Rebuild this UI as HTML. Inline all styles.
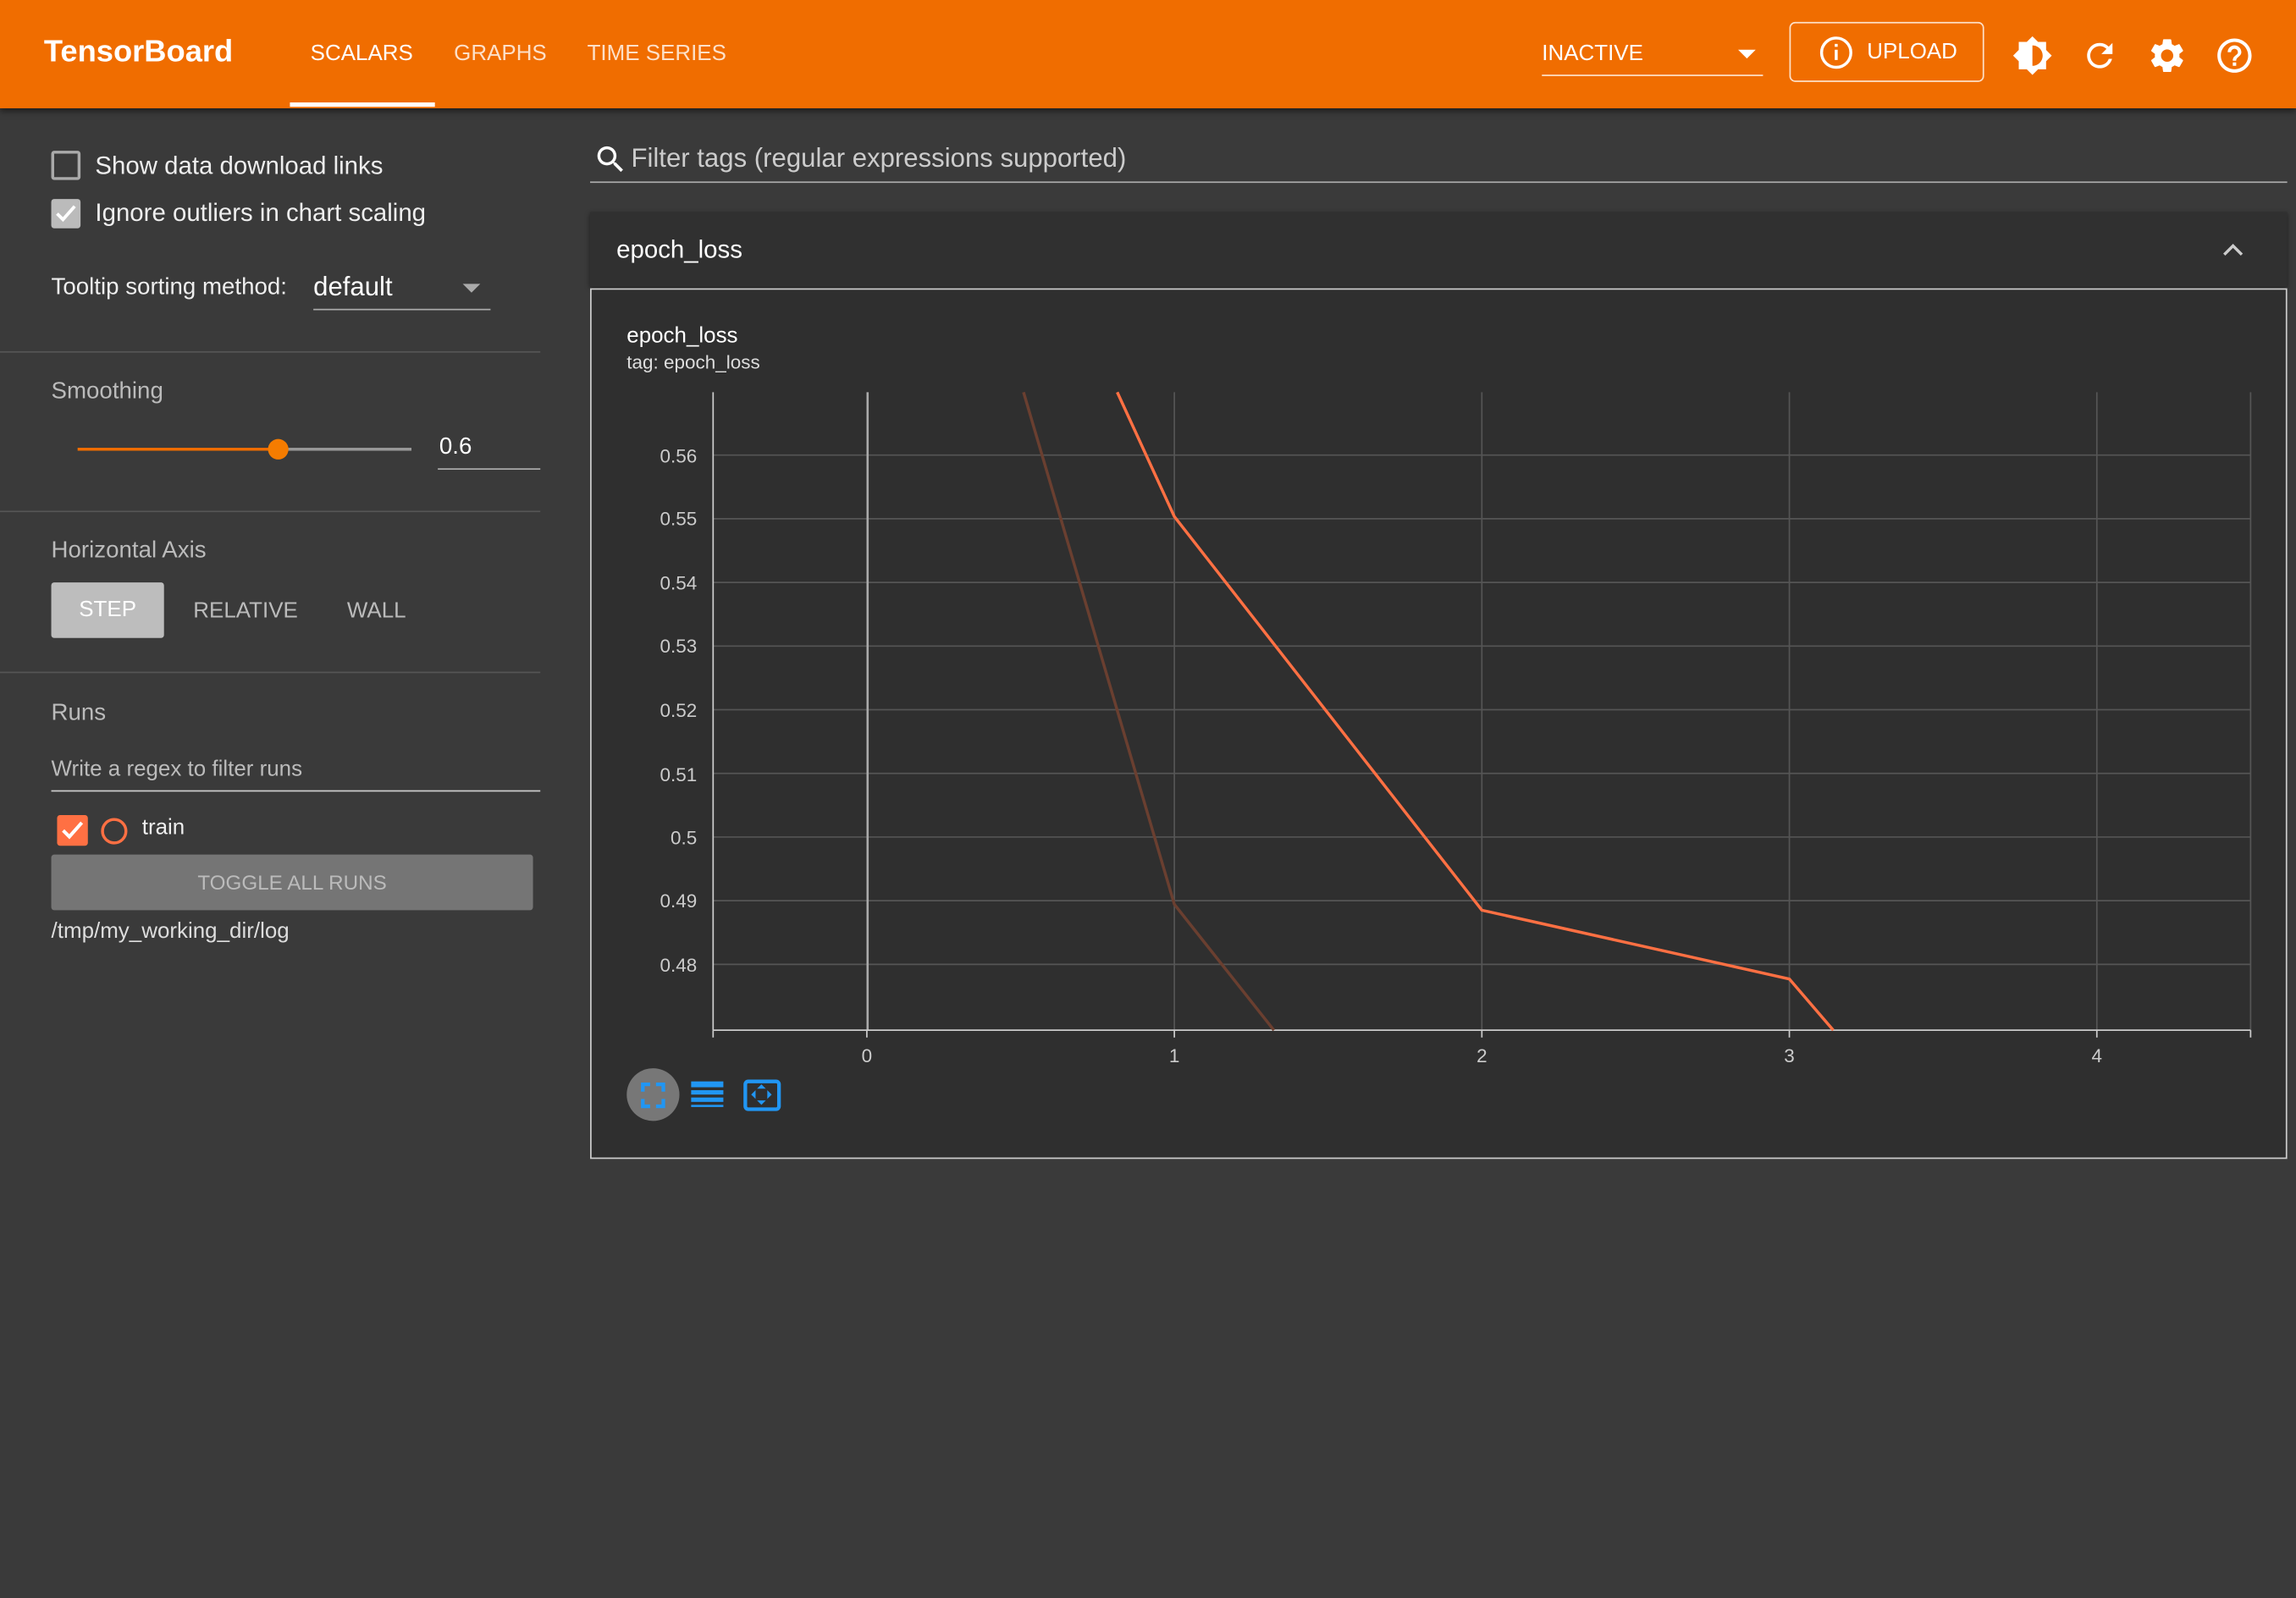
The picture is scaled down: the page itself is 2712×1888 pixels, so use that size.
<!DOCTYPE html>
<html><head><meta charset="utf-8"><style>
html,body{margin:0;padding:0;background:#3a3a3a;overflow:hidden;width:2712px;height:1888px}
#w{width:1568px;height:1092px;transform:scale(1.72959,1.7289);transform-origin:0 0;position:relative;font-family:"Liberation Sans",sans-serif;color:#fff;background:#3a3a3a}
.a{position:absolute}
.hdr{left:0;top:0;width:1568px;height:74px;background:#f06d00;box-shadow:0 2px 4px rgba(0,0,0,.5)}
.nav{font-size:15px;top:28px;color:#fde0c8}
.lbl{font-size:17px;color:#eee}
.gray{color:#bbb}
.hr{height:1px;background:#555;left:0;width:369px}
</style></head><body><div id="w">
<div class="a hdr"></div>
<div class="a" style="left:30px;top:24px;font-size:21px;font-weight:bold;color:#fff">TensorBoard</div>
<div class="a nav" style="left:212px;color:#fff">SCALARS</div>
<div class="a" style="left:198px;top:70px;width:99px;height:3px;background:#fff"></div>
<div class="a nav" style="left:310px">GRAPHS</div>
<div class="a nav" style="left:401px">TIME SERIES</div>
<div class="a" style="left:1053px;top:28px;font-size:15px">INACTIVE</div>
<div class="a" style="left:1187px;top:34px;border:6px solid transparent;border-top:6px solid #fff;border-bottom:0"></div>
<div class="a" style="left:1053px;top:51px;width:151px;height:1px;background:#fde0c8"></div>
<div class="a" style="left:1222px;top:15px;width:131px;height:39px;border:1px solid #fde0c8;border-radius:4px"></div>
<svg class="a" style="left:1242px;top:24px" width="24" height="24" viewBox="0 0 24 24"><circle cx="12" cy="12" r="10" fill="none" stroke="#fff" stroke-width="2"/><rect x="11" y="10" width="2" height="7" fill="#fff"/><rect x="11" y="6" width="2" height="2" fill="#fff"/></svg>
<div class="a" style="left:1275px;top:27px;font-size:15px">UPLOAD</div>
<svg class="a" style="left:1374px;top:24px" width="28" height="28" viewBox="0 0 24 24"><path fill="#fff" d="M20 8.69V4h-4.69L12 .69 8.69 4H4v4.69L.69 12 4 15.31V20h4.69L12 23.31 15.31 20H20v-4.69L23.31 12 20 8.69zM12 18V6c3.31 0 6 2.69 6 6s-2.69 6-6 6z"/></svg>
<svg class="a" style="left:1421px;top:25px" width="26" height="26" viewBox="0 0 24 24"><path fill="#fff" d="M17.65 6.35A7.958 7.958 0 0 0 12 4c-4.42 0-7.99 3.58-7.99 8s3.57 8 7.99 8c3.73 0 6.84-2.55 7.73-6h-2.08A5.99 5.99 0 0 1 12 18c-3.31 0-6-2.69-6-6s2.69-6 6-6c1.66 0 3.14.69 4.22 1.78L13 11h7V4l-2.35 2.35z"/></svg>
<svg class="a" style="left:1466px;top:24px" width="28" height="28" viewBox="0 0 24 24"><path fill="#fff" d="M19.14 12.94c.04-.3.06-.61.06-.94 0-.32-.02-.64-.07-.94l2.03-1.58a.49.49 0 0 0 .12-.61l-1.92-3.32a.488.488 0 0 0-.59-.22l-2.39.96c-.5-.38-1.03-.7-1.62-.94l-.36-2.54a.484.484 0 0 0-.48-.41h-3.84c-.24 0-.43.17-.47.41l-.36 2.54c-.59.24-1.13.57-1.62.94l-2.39-.96c-.22-.08-.47 0-.59.22L2.74 8.87c-.12.21-.08.47.12.61l2.03 1.58c-.05.3-.09.63-.09.94s.02.64.07.94l-2.03 1.58a.49.49 0 0 0-.12.61l1.92 3.32c.12.22.37.29.59.22l2.39-.96c.5.38 1.03.7 1.62.94l.36 2.54c.05.24.24.41.48.41h3.84c.24 0 .44-.17.47-.41l.36-2.54c.59-.24 1.13-.56 1.62-.94l2.39.96c.22.08.47 0 .59-.22l1.92-3.32c.12-.22.07-.47-.12-.61l-2.01-1.58zM12 15.6c-1.98 0-3.6-1.62-3.6-3.6s1.62-3.6 3.6-3.6 3.6 1.62 3.6 3.6-1.62 3.6-3.6 3.6z"/></svg>
<svg class="a" style="left:1512px;top:24px" width="28" height="28" viewBox="0 0 24 24"><path fill="#fff" d="M11 18h2v-2h-2v2zm1-16C6.48 2 2 6.48 2 12s4.48 10 10 10 10-4.48 10-10S17.52 2 12 2zm0 18c-4.41 0-8-3.59-8-8s3.59-8 8-8 8 3.59 8 8-3.59 8-8 8zm0-14c-2.21 0-4 1.79-4 4h2c0-1.1.9-2 2-2s2 .9 2 2c0 2-3 1.75-3 5h2c0-2.25 3-2.5 3-5 0-2.21-1.79-4-4-4z"/></svg>

<!-- sidebar -->
<div class="a" style="left:35px;top:103px;width:16px;height:16px;border:2px solid #aaa;border-radius:2px"></div>
<div class="a lbl" style="left:65px;top:104px">Show data download links</div>
<div class="a" style="left:35px;top:136px;width:20px;height:20px;background:#bbb;border-radius:2px"></div>
<svg class="a" style="left:37px;top:138px" width="16" height="16" viewBox="0 0 16 16"><path d="M2 8l4 4 8-9" stroke="#fff" stroke-width="2.2" fill="none"/></svg>
<div class="a lbl" style="left:65px;top:136px">Ignore outliers in chart scaling</div>
<div class="a" style="left:35px;top:188px;font-size:16px;color:#eee">Tooltip sorting method:</div>
<div class="a" style="left:214px;top:186px;font-size:18px">default</div>
<div class="a" style="left:316px;top:194px;border:6px solid transparent;border-top:6px solid #aaa;border-bottom:0"></div>
<div class="a" style="left:214px;top:211px;width:121px;height:1px;background:#aaa"></div>
<div class="a hr" style="top:240px"></div>
<div class="a gray" style="left:35px;top:259px;font-size:16px">Smoothing</div>
<div class="a" style="left:53px;top:306px;width:137px;height:2px;background:#f06d00"></div>
<div class="a" style="left:190px;top:306px;width:91px;height:2px;background:#999"></div>
<div class="a" style="left:183px;top:300px;width:14px;height:14px;border-radius:50%;background:#f57c00"></div>
<div class="a" style="left:300px;top:297px;font-size:16px">0.6</div>
<div class="a" style="left:299px;top:320px;width:70px;height:1px;background:#aaa"></div>
<div class="a hr" style="top:349px"></div>
<div class="a gray" style="left:35px;top:368px;font-size:16px">Horizontal Axis</div>
<div class="a" style="left:35px;top:398px;width:77px;height:38px;background:#bdbdbd;border-radius:2px;font-size:15px;line-height:38px;text-align:center;color:#fff">STEP</div>
<div class="a gray" style="left:132px;top:409px;font-size:15px">RELATIVE</div>
<div class="a gray" style="left:237px;top:409px;font-size:15px">WALL</div>
<div class="a hr" style="top:459px"></div>
<div class="a gray" style="left:35px;top:479px;font-size:16px">Runs</div>
<div class="a gray" style="left:35px;top:517px;font-size:15px">Write a regex to filter runs</div>
<div class="a" style="left:35px;top:540px;width:334px;height:1px;background:#ccc"></div>
<div class="a" style="left:39px;top:557px;width:21px;height:21px;background:#ff7043;border-radius:2px"></div>
<svg class="a" style="left:41px;top:559px" width="17" height="17" viewBox="0 0 16 16"><path d="M2 8l4 4 8-9" stroke="#fff" stroke-width="2.2" fill="none"/></svg>
<div class="a" style="left:69px;top:559px;width:14px;height:14px;border:2px solid #ff7043;border-radius:50%"></div>
<div class="a" style="left:97px;top:557px;font-size:15px;color:#eee">train</div>
<div class="a" style="left:35px;top:584px;width:329px;height:38px;background:#757575;border-radius:2px;font-size:14px;line-height:38px;text-align:center;color:#bbb">TOGGLE ALL RUNS</div>
<div class="a" style="left:35px;top:628px;font-size:15px;color:#ddd">/tmp/my_working_dir/log</div>

<!-- main -->
<svg class="a" style="left:405px;top:97px" width="24" height="24" viewBox="0 0 24 24"><path fill="#fff" d="M15.5 14h-.79l-.28-.27A6.47 6.47 0 0 0 16 9.5 6.5 6.5 0 1 0 9.5 16c1.61 0 3.09-.59 4.23-1.57l.27.28v.79l5 4.99L20.49 19l-4.99-5zm-6 0C7.01 14 5 11.99 5 9.5S7.01 5 9.5 5 14 7.01 14 9.5 11.99 14 9.5 14z"/></svg>
<div class="a" style="left:431px;top:98px;font-size:18px;color:#ccc">Filter tags (regular expressions supported)</div>
<div class="a" style="left:403px;top:124px;width:1159px;height:1px;background:#aaa"></div>
<div class="a" style="left:403px;top:145px;width:1159px;height:51px;background:#303030;box-shadow:0 1px 3px rgba(0,0,0,.5)"></div>
<div class="a" style="left:421px;top:161px;font-size:17px">epoch_loss</div>
<svg class="a" style="left:1516px;top:164px" width="18" height="14" viewBox="0 0 18 14"><path d="M3 10l6-6 6 6" stroke="#ccc" stroke-width="2" fill="none"/></svg>
<div class="a" style="left:403px;top:197px;width:1157px;height:593px;background:#2f2f2f;border:1px solid #ccc"></div>
<div class="a" style="left:428px;top:221px;font-size:15px">epoch_loss</div>
<div class="a" style="left:428px;top:240px;font-size:13px;color:#ddd">tag: epoch_loss</div>
<svg class="a" style="left:0;top:0" width="1568" height="800">
<g stroke="#555" stroke-width="1">
<line x1="487" x2="1537" y1="311" y2="311"/><line x1="487" x2="1537" y1="354.5" y2="354.5"/><line x1="487" x2="1537" y1="398" y2="398"/><line x1="487" x2="1537" y1="441.5" y2="441.5"/><line x1="487" x2="1537" y1="485" y2="485"/><line x1="487" x2="1537" y1="528.5" y2="528.5"/><line x1="487" x2="1537" y1="572" y2="572"/><line x1="487" x2="1537" y1="615.5" y2="615.5"/><line x1="487" x2="1537" y1="659" y2="659"/>
<line x1="802" x2="802" y1="268" y2="704"/><line x1="1012" x2="1012" y1="268" y2="704"/><line x1="1222" x2="1222" y1="268" y2="704"/><line x1="1432" x2="1432" y1="268" y2="704"/><line x1="1537" x2="1537" y1="268" y2="704"/>
</g>
<line x1="592.5" x2="592.5" y1="268" y2="704" stroke="#aaa" stroke-width="1.5"/>
<line x1="487" x2="487" y1="268" y2="704" stroke="#ccc"/>
<line x1="487" x2="1537" y1="704" y2="704" stroke="#ccc"/>
<g stroke="#ccc"><line x1="487" x2="487" y1="704" y2="709"/><line x1="592" x2="592" y1="704" y2="709"/><line x1="802" x2="802" y1="704" y2="709"/><line x1="1012" x2="1012" y1="704" y2="709"/><line x1="1222" x2="1222" y1="704" y2="709"/><line x1="1432" x2="1432" y1="704" y2="709"/><line x1="1537" x2="1537" y1="704" y2="709"/></g>
<g fill="#ccc" font-family="Liberation Sans" font-size="13" text-anchor="end">
<text x="476" y="316">0.56</text><text x="476" y="359">0.55</text><text x="476" y="403">0.54</text><text x="476" y="446">0.53</text><text x="476" y="490">0.52</text><text x="476" y="534">0.51</text><text x="476" y="577">0.5</text><text x="476" y="620">0.49</text><text x="476" y="664">0.48</text>
</g>
<g fill="#ccc" font-family="Liberation Sans" font-size="13" text-anchor="middle">
<text x="592" y="726">0</text><text x="802" y="726">1</text><text x="1012" y="726">2</text><text x="1222" y="726">3</text><text x="1432" y="726">4</text>
</g>
<polyline points="699,268 802,618 870,704" fill="none" stroke="#6a3f30" stroke-width="2"/>
<polyline points="763,268 802,353 1012,622 1222,669 1252,704" fill="none" stroke="#ff7043" stroke-width="2"/>
<circle cx="446" cy="748" r="18" fill="#777"/>
<g fill="none" stroke="#2196f3" stroke-width="2.5"><path d="M439 746v-5h5M448 741h5v5M453 751v5h-5M444 756h-5v-5"/></g>
<g fill="#2196f3"><rect x="472" y="739" width="22" height="4"/><rect x="472" y="745" width="22" height="3"/><rect x="472" y="750" width="22" height="3"/><rect x="472" y="755" width="22" height="1.5"/></g>
<rect x="509" y="739" width="23" height="19" rx="2" fill="none" stroke="#2196f3" stroke-width="2.5"/>
<g fill="#2196f3"><path d="M517 744l3-3 3 3z"/><path d="M517 752l3 3 3-3z"/><path d="M513 745v6l-3-3z" transform="translate(3 0)"/><path d="M524 745v6l3-3z"/></g>
</svg>
</div></body></html>
